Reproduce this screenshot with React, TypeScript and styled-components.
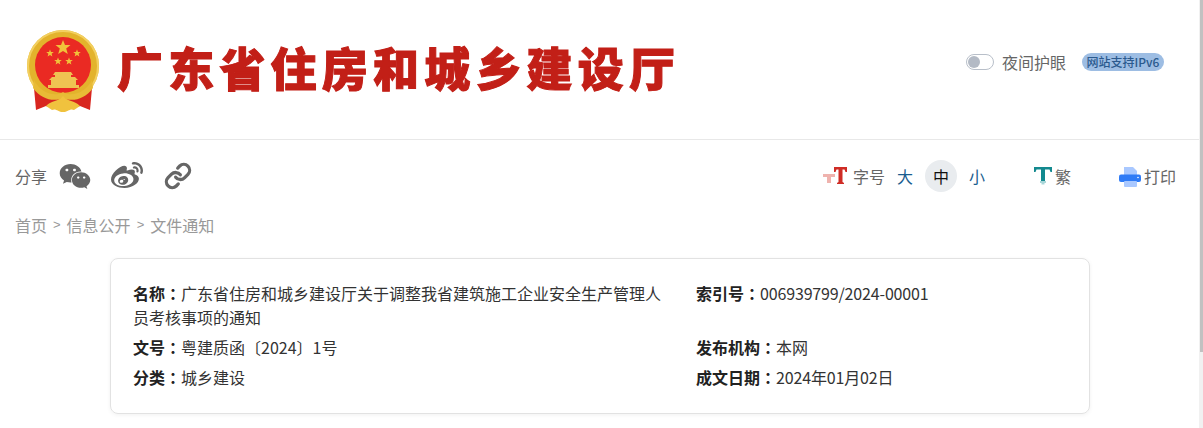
import React from "react";
import styled, { createGlobalStyle } from "styled-components";
import { FaWeibo, FaWeixin } from "react-icons/fa";
import { Link } from "lucide-react";

const Global = createGlobalStyle`
  html, body { margin: 0; padding: 0; background: #fff; overflow: hidden; height: 428px; }
  body { font-family: "Noto Sans CJK SC", sans-serif; }
  * { box-sizing: border-box; }
`;
const Page = styled.div`width: 1203px; height: 428px; position: relative; overflow: hidden;`;
const Scrollbar = styled.div`
  position: absolute; top: 0; right: 0; width: 4px; height: 428px; background: #f1f1f1; padding-left: 1px;
  &::after { content: ""; display: block; height: 352px; background: #c1c1c1; }
`;
const Header = styled.header`
  height: 140px; border-bottom: 1px solid #e8e8e8; display: flex; align-items: center;
  padding: 0 39px 0 24px;
`;
const Emblem = styled.svg`width: 78px; height: 84px; flex: none; margin-top: 5px;`;
const Title = styled.h1`
  margin: 0 0 7px 15px; font: 900 46px/1 "Noto Sans CJK SC", sans-serif; letter-spacing: 5.2px;
  color: #c21f17; -webkit-text-stroke: 1px #c21f17; white-space: nowrap; transform: translateZ(0); will-change: transform;
`;
const HeaderRight = styled.div`margin: 0 0 16px auto; display: flex; align-items: center;`;
const Toggle = styled.span`
  width: 28px; height: 16px; border: 1px solid #b8bfc9; border-radius: 8px; display: flex; align-items: center; padding-left: 1px;
  &::before { content: ""; width: 12px; height: 12px; border-radius: 50%; background: #b3bac5; }
`;
const NightLabel = styled.span`margin-left: 8px; font: 16px/20px "Noto Sans CJK SC", sans-serif; color: #666;`;
const Badge = styled.span`
  margin-left: 16px; width: 82px; height: 18px; border-radius: 9px; background: #9dbde3; color: #2b5a8e; text-align: center;
  font: 500 12px/18px "Noto Sans CJK SC", sans-serif; white-space: nowrap;
`;
const Toolbar = styled.div`display: flex; align-items: center; height: 72px; padding: 0 27px 0 15px;`;
const ShareLabel = styled.span`font: 16px/20px "Noto Sans CJK SC", sans-serif; color: #666; margin-right: 12px;`;
const WechatIcon = styled(FaWeixin)`width: 32px; height: 29px; flex: none; color: #666; margin-right: 20px;`;
const WeiboIcon = styled(FaWeibo)`width: 32px; height: 32px; flex: none; color: #666; margin-right: 21px;`;
const LinkIcon = styled(Link)`width: 28px; height: 28px; flex: none; color: #666;`;
const Tools = styled.div`margin-left: auto; display: flex; align-items: center;`;
const ToolLabel = styled.span`font: 16px/20px "Noto Sans CJK SC", sans-serif; color: #666;`;
const FontSizeLabel = styled(ToolLabel)`margin-left: 2px;`;
const SizeBtn = styled.span<{ $active?: boolean }>`
  width: 32px; height: 32px; border-radius: 50%; display: flex; align-items: center; justify-content: center;
  font: 16px/20px "Noto Sans CJK SC", sans-serif; color: ${p => p.$active ? "#111" : "#1a5d8f"}; background: ${p => p.$active ? "#e9ecef" : "transparent"};
`;
const Sizes = styled.div`display: flex; gap: 4px; margin-left: 4px;`;
const ToolIcon = styled.svg`flex: none; margin-right: 3px;`;
const Group = styled.div<{ $gap: number }>`display: flex; align-items: center; margin-left: ${p => p.$gap}px;`;
const Crumbs = styled.nav`
  display: flex; align-items: center; padding-left: 15px; height: 20px; margin-top: 3px; font: 16px/20px "Noto Sans CJK SC", sans-serif; color: #999;
`;
const Sep = styled.span`margin: 0 6px; font: 13px/20px "Liberation Sans", sans-serif;`;
const Card = styled.section`
  margin: 23px 0 0 110px; width: 980px; height: 156px; border: 1px solid #e2e2e2; border-radius: 8px;
  box-shadow: 0 1px 4px rgba(0,0,0,.06); padding: 22px 22px; display: grid; grid-template-columns: 563px 1fr; row-gap: 6px;
  align-content: start; font: 16px/24px "Noto Sans CJK SC", sans-serif; color: #333;
`;
const Field = styled.div`width: 533px;`;
const Key = styled.b`font-weight: 700; color: #222;`;
const Colon = styled.span`font-family: "Noto Sans CJK TC", sans-serif;`;
const Numeric = styled.span`letter-spacing: -.16px;`;

const Label = ({ children }: { children: string }) => <Key>{children}<Colon>：</Colon></Key>;

export default function App() {
  return (
    <Page>
      <Global />
      <Header>
        <Emblem viewBox="0 0 78 84">
          <circle cx="39" cy="36" r="36" fill="#e3b32c" />
          <circle cx="39" cy="36" r="35" fill="none" stroke="#f3d060" strokeWidth="2" />
          <circle cx="39" cy="35" r="28" fill="#ea2a23" />
          <polygon points="39,10 41,15 46.500,15 42.200,18.500 43.800,24 39,21 34.200,24 35.800,18.500 31.500,15 37,15" fill="#f1c23a" />
          <polygon points="26,19.500 27,22 29.800,22 27.600,23.800 28.400,26.500 26,25 23.600,26.500 24.400,23.800 22.200,22 25,22" fill="#f1c23a" />
          <polygon points="53,19.500 54,22 56.800,22 54.600,23.800 55.400,26.500 53,25 50.600,26.500 51.400,23.800 49.200,22 52,22" fill="#f1c23a" />
          <polygon points="34,27.500 35,30 37.800,30 35.600,31.800 36.400,34.500 34,33 31.600,34.500 32.400,31.800 30.200,30 33,30" fill="#f1c23a" />
          <polygon points="45,27.500 46,30 48.800,30 46.600,31.800 47.400,34.500 45,33 42.600,34.500 43.400,31.800 41.200,30 44,30" fill="#f1c23a" />
          <path d="M31 42h16l2 3h-2v2h4l3 3h-2v5h3v3H24v-3h3v-5h-2l3-3h3v-2h-2z" fill="#efc452" />
          <path d="M10 58 C20 70 58 70 68 58 L66 80 L56 76 L48 79 C43 74 35 74 30 79 L22 76 L12 80 Z" fill="#d8261f" />
          <path d="M10 50 C16 62 30 68 39 62 C48 68 62 62 68 50 L69 58 C60 70 48 72 39 68 C30 72 18 70 9 58 Z" fill="#e8bb36" />
          <path d="M22 76 C28 70 34 72 39 66 C44 72 50 70 56 76 L50 80 C46 78 44 82 39 82 C34 82 32 78 28 80 Z" fill="#f0c23e" />
        </Emblem>
        <Title>广东省住房和城乡建设厅</Title>
        <HeaderRight>
          <Toggle />
          <NightLabel>夜间护眼</NightLabel>
          <Badge>网站支持IPv6</Badge>
        </HeaderRight>
      </Header>
      <Toolbar>
        <ShareLabel>分享</ShareLabel>
        <WechatIcon />
        <WeiboIcon />
        <LinkIcon strokeWidth={2.8} />
        <Tools>
          <ToolIcon width="26" height="20" viewBox="0 0 26 20">
            <path d="M1 8h12v3H9v6H5v-6H1z" fill="#efb3ae" />
            <path d="M12 1h13v5h-1.500L22.500 3.500h-2V16l1.500 1v1h-7v-1l1.500-1V3.500h-2L13.500 6H12z" fill="#cf2c25" />
          </ToolIcon>
          <FontSizeLabel>字号</FontSizeLabel>
          <Sizes>
            <SizeBtn>大</SizeBtn>
            <SizeBtn $active>中</SizeBtn>
            <SizeBtn>小</SizeBtn>
          </Sizes>
          <Group $gap={41}>
            <ToolIcon width="18" height="20" viewBox="0 0 18 20">
              <path d="M0 1h18v5h-1.500L15.500 3.500h-4.500V15H7V3.500H2.500L1.500 6H0z" fill="#13898f" />
              <path d="M6 15h6v2h-1.500v1.500h-3V17H6z" fill="#a9d6d8" />
            </ToolIcon>
            <ToolLabel>繁</ToolLabel>
          </Group>
          <Group $gap={48}>
            <ToolIcon width="22" height="21" viewBox="0 0 22 21">
              <path d="M5 1h9l4 4v5H5z" fill="#a9c8ff" />
              <rect x="0" y="8.500" width="22" height="7.500" rx="2" fill="#2f7bf6" />
              <rect x="5" y="15" width="13" height="6" rx="1" fill="#a9c8ff" />
              <circle cx="19" cy="11.500" r=".8" fill="#fff" />
            </ToolIcon>
            <ToolLabel>打印</ToolLabel>
          </Group>
        </Tools>
      </Toolbar>
      <Crumbs>首页<Sep>&gt;</Sep>信息公开<Sep>&gt;</Sep>文件通知</Crumbs>
      <Card>
        <Field><Label>名称</Label>广东省住房和城乡建设厅关于调整我省建筑施工企业安全生产管理人员考核事项的通知</Field>
        <Field><Label>索引号</Label><Numeric>006939799/2024-00001</Numeric></Field>
        <Field><Label>文号</Label>粤建质函〔2024〕1号</Field>
        <Field><Label>发布机构</Label>本网</Field>
        <Field><Label>分类</Label>城乡建设</Field>
        <Field><Label>成文日期</Label><Numeric>2024年01月02日</Numeric></Field>
      </Card>
      <Scrollbar />
    </Page>
  );
}
